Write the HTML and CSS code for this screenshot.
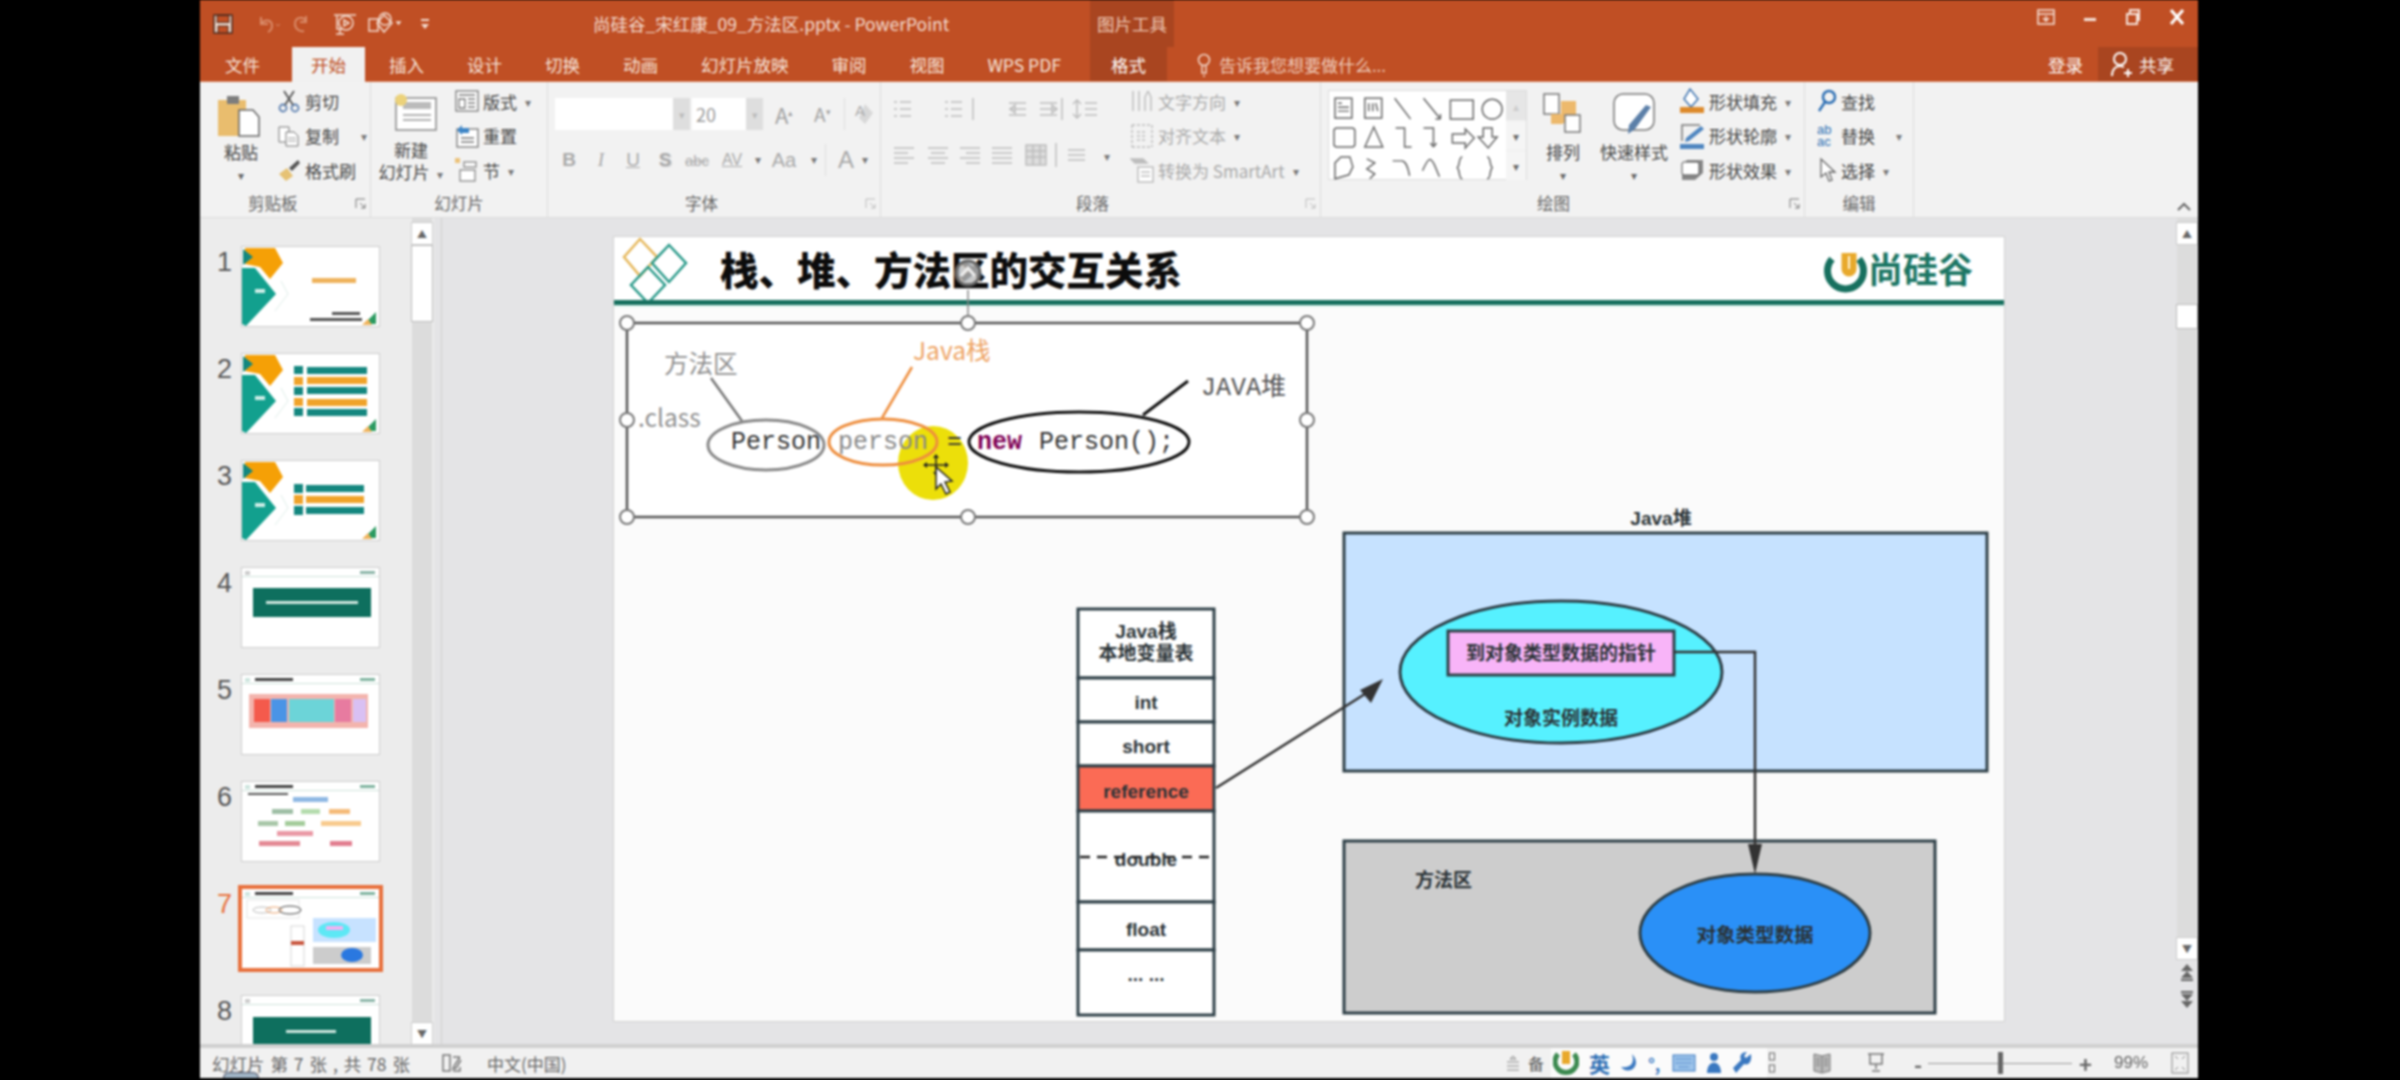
FILE: index.html
```html
<!DOCTYPE html>
<html lang="zh-CN">
<head>
    <meta charset="UTF-8">
    <title>尚硅谷_宋红康_09_方法区.pptx - PowerPoint</title>
    <link rel="stylesheet" href="styles.css">
</head>
<body>
<div class="app">
    <!-- title bar -->
    <div class="titlebar">
        <div class="qat">
            <svg class="save" width="20" height="20" viewBox="0 0 20 20"><rect x="1" y="1" width="18" height="18" fill="#f3dcd0" stroke="#4a2a1e" stroke-width="1.5"/><rect x="4" y="1.5" width="12" height="7" fill="#c04f24" stroke="#4a2a1e"/><rect x="5" y="12" width="10" height="7" fill="#c04f24" stroke="#4a2a1e"/></svg>
            <svg class="undo" width="24" height="20" viewBox="0 0 24 20" fill="none" stroke="#d98a68" stroke-width="2"><path d="M5 3v7h7"/><path d="M5 10c3-5 11-5 11 2 0 3-2 5-4 6"/><path d="M20 10l2 2 2-2" stroke-width="1"/></svg>
            <svg class="redo" width="18" height="20" viewBox="0 0 18 20" fill="none" stroke="#d98a68" stroke-width="2"><path d="M14 2v6h-6"/><path d="M14 7C11 2 3 3 3 10c0 5 5 8 9 7"/></svg>
            <svg class="present" width="24" height="24" viewBox="0 0 24 24" fill="none" stroke="#f3dcd0" stroke-width="1.5"><path d="M1 3h22"/><circle cx="13" cy="11" r="7"/><path d="M11 8l5 3-5 3z"/><path d="M4 4v13h6M7 17v5M3 22h8"/></svg>
            <svg class="shapes" width="35" height="24" viewBox="0 0 35 24" fill="none" stroke="#f3dcd0" stroke-width="1.5"><path d="M2 7h9v12H2z"/><path d="M17 3l8 8-8 9-7-9z"/><circle cx="18" cy="7" r="6"/><path d="M30 10l3 0-1.5 2z" fill="#f3dcd0"/></svg>
            <svg class="customize" width="10" height="14" viewBox="0 0 10 14" fill="#f3dcd0"><rect x="1" y="2" width="8" height="2"/><path d="M1 7h8l-4 5z"/></svg>
        </div>
        <div class="doc-title">尚硅谷_宋红康_09_方法区.pptx - PowerPoint</div>
        <div class="ctx-title">图片工具</div>
        <div class="win-btns">
            <svg width="18" height="18" viewBox="0 0 18 18" fill="none" stroke="#f6e3da" stroke-width="1.5"><rect x="1" y="2" width="16" height="14"/><path d="M1 6h16M9 8v5M6 10l3 3 3-3"/></svg>
            <svg width="14" height="18" viewBox="0 0 14 18" fill="#f6e3da"><rect x="1" y="10" width="12" height="3"/></svg>
            <svg width="16" height="18" viewBox="0 0 16 18" fill="none" stroke="#f6e3da" stroke-width="2"><rect x="2" y="6" width="10" height="10"/><path d="M5 5V2h9v10h-2"/></svg>
            <svg width="16" height="18" viewBox="0 0 16 18" fill="none" stroke="#fff" stroke-width="3"><path d="M2 2l12 14M14 2L2 16"/></svg>
        </div>
    </div>

    <!-- tabs -->
    <div class="tabs">
        <div class="tab file-tab">文件</div>
        <div class="tab active">开始</div>
        <div class="tab">插入</div>
        <div class="tab">设计</div>
        <div class="tab">切换</div>
        <div class="tab">动画</div>
        <div class="tab">幻灯片放映</div>
        <div class="tab">审阅</div>
        <div class="tab">视图</div>
        <div class="tab">WPS PDF</div>
        <div class="tab ctx-tab">格式</div>
        <svg class="bulb" width="14" height="24" viewBox="0 0 14 24" fill="none" stroke="#f3d9cc" stroke-width="1.5"><circle cx="7" cy="7" r="5.5"/><path d="M5 13v7h4v-7M6 23h2"/></svg>
        <div class="tell-me">告诉我您想要做什么...</div>
        <div class="login">登录</div>
        <div class="share">
            <svg width="24" height="28" viewBox="0 0 24 28" fill="none" stroke="#fff" stroke-width="2"><circle cx="10" cy="9" r="6"/><path d="M2 26c0-7 4-10 8-10 2 0 3 1 4 1M18 19v8M14 23h8"/></svg>
            <span>共享</span>
        </div>
    </div>

    <!-- ribbon -->
    <div class="ribbon">
        <div class="group g-clip">
            <div class="group-body">
                <div class="big-btn paste">
                    <svg width="42" height="42" viewBox="0 0 42 42"><rect x="0" y="5" width="28" height="36" fill="#e9bd6e"/><rect x="9" y="1" width="12" height="8" fill="#7d7d7d"/><path d="M21 15h14l6 7v19H21z" fill="#fff" stroke="#666" stroke-width="1.5"/></svg>
                    <div class="big-label">粘贴</div>
                    <div class="caret-line">▾</div>
                </div>
                <div class="small-col">
                    <div class="small-row"><svg width="24" height="24" viewBox="0 0 24 24" fill="none" stroke="#5b7fb0" stroke-width="1.8"><circle cx="6" cy="19" r="3.5"/><circle cx="18" cy="19" r="3.5"/><path d="M8 16L17 2M16 16L7 2" stroke="#555"/></svg><span>剪切</span></div>
                    <div class="small-row"><svg width="24" height="24" viewBox="0 0 24 24" fill="#fff" stroke="#777"><path d="M2 3h10v15H2z"/><path d="M9 8h8l4 4v10H9z"/><path d="M11 14h8M11 17h8" stroke="#999"/></svg><span>复制</span><i class="caret wide">▾</i></div>
                    <div class="small-row"><svg width="24" height="24" viewBox="0 0 24 24"><path d="M2 16l8-6 6 8-7 5z" fill="#e6c274"/><path d="M12 10l9-8 2 3-8 8z" fill="#555"/></svg><span>格式刷</span></div>
                </div>
            </div>
            <div class="group-label"><span></span><span>剪贴板</span><svg class="launcher" width="11" height="11" viewBox="0 0 11 11" fill="none" stroke="#777"><path d="M1 10V1h9M5 5l5 5M10 6v4H6"/></svg></div>
        </div>

        <div class="group g-slides">
            <div class="group-body">
                <div class="big-btn new-slide">
                    <svg width="44" height="38" viewBox="0 0 44 38"><rect x="3" y="5" width="40" height="32" fill="#fff" stroke="#888" stroke-width="1.5"/><rect x="10" y="9" width="28" height="7" fill="#bbb"/><path d="M10 22h28M10 27h28" stroke="#999" stroke-width="1.5"/><circle cx="8" cy="7" r="6" fill="#ecd27a"/></svg>
                    <div class="big-label">新建</div>
                    <div class="big-label tight">幻灯片 <i class="caret">▾</i></div>
                </div>
                <div class="small-col">
                    <div class="small-row"><svg width="24" height="24" viewBox="0 0 24 24" fill="#fff" stroke="#777" stroke-width="1.3"><rect x="1" y="2" width="22" height="20"/><path d="M4 6h16M4 10h6v9H4zM13 10h7M13 14h7M13 18h7"/></svg><span>版式</span><i class="caret">▾</i></div>
                    <div class="small-row"><svg width="24" height="24" viewBox="0 0 24 24" fill="#fff" stroke="#777" stroke-width="1.3"><rect x="2" y="5" width="21" height="18"/><path d="M6 14h13M6 18h13"/><path d="M2 6l5-5v3h7v5H7v2z" fill="#3f86c6" stroke="none"/></svg><span>重置</span></div>
                    <div class="small-row"><svg width="24" height="26" viewBox="0 0 24 26" fill="#fff" stroke="#888" stroke-width="1.3"><rect x="5" y="13" width="15" height="11"/><rect x="9" y="5" width="12" height="5"/><rect x="0" y="1" width="5" height="5" fill="#ecc27a" stroke="none"/></svg><span>节</span><i class="caret">▾</i></div>
                </div>
            </div>
            <div class="group-label"><span></span><span>幻灯片</span><span></span></div>
        </div>

        <div class="group g-font">
            <div class="group-body column">
                <div class="font-row">
                    <div class="combo name-combo"></div><div class="combo-arrow">▾</div>
                    <div class="combo size-combo">20</div><div class="combo-arrow">▾</div>
                    <span class="grow-a">A<sup>▴</sup></span>
                    <span class="shrink-a">A<sup>▾</sup></span>
                    <span class="vline"></span>
                    <svg class="eraser" width="22" height="24" viewBox="0 0 22 24"><path d="M12 2l8 9-8 11-6-6z" fill="#d8d8d8"/><text x="2" y="14" class="erase-a">A</text></svg>
                </div>
                <div class="format-row">
                    <span class="fmt w32 b">B</span><span class="fmt w32 it">I</span><span class="fmt w32 u">U</span><span class="fmt w32 b sh">S</span><span class="fmt w32 strike">abc</span><span class="fmt w40 av">AV</span><i class="caret">▾</i><span class="fmt w44">Aa</span><i class="caret">▾</i><span class="vline tall"></span><span class="fmt big-a">A</span><i class="caret">▾</i>
                </div>
            </div>
            <div class="group-label"><span></span><span>字体</span><svg class="launcher faint" width="11" height="11" viewBox="0 0 11 11" fill="none" stroke="#bbb"><path d="M1 10V1h9M5 5l5 5M10 6v4H6"/></svg></div>
        </div>

        <div class="group g-para">
            <div class="group-body">
                <div class="para-left">
                    <div class="para-row">
                        <svg width="180" height="24" viewBox="0 0 180 24" fill="none" stroke="#bdbdbd" stroke-width="1.5"><path d="M4 5h3M10 5h11M4 12h3M10 12h11M4 19h3M10 19h11"/><path d="M55 5h3M61 5h11M55 12h3M61 12h11M55 19h3M61 19h11"/><path d="M83 1v22"/><path d="M119 6h17M119 12h17M119 18h17M120 12l5-4v8zM150 6h17M150 12h17M150 18h17M167 12l-5-4v8z"/><path d="M172 1v22"/></svg>
                        <svg width="36" height="24" viewBox="0 0 36 24" fill="none" stroke="#bdbdbd" stroke-width="1.5"><path d="M7 4v16M3 7l4-4 4 4M3 17l4 4 4-4M15 6h12M15 12h12M15 18h12"/></svg>
                    </div>
                    <div class="para-row second">
                        <svg width="210" height="26" viewBox="0 0 210 26" fill="none" stroke="#bdbdbd" stroke-width="1.5"><path d="M4 6h20M4 11h14M4 16h20M4 21h14"/><path d="M38 6h20M41 11h14M38 16h20M41 21h14"/><path d="M70 6h20M76 11h14M70 16h20M76 21h14"/><path d="M102 6h20M102 11h20M102 16h20M102 21h20"/><rect x="136" y="3" width="20" height="20" fill="#ddd"/><path d="M136 9h20M136 15h20M143 3v20M150 3v20"/><path d="M166 1v24"/><path d="M178 8h17M178 13h17M178 18h17"/></svg>
                        <i class="caret">▾</i>
                    </div>
                </div>
                <div class="small-col para-text">
                    <div class="small-row"><svg width="24" height="24" viewBox="0 0 24 24" fill="none" stroke="#bdbdbd" stroke-width="1.5"><path d="M3 2v20M9 2v20M15 8v14M18 2l-3 6M18 2l3 6M21 8v14"/></svg><span>文字方向</span><i class="caret">▾</i></div>
                    <div class="small-row"><svg width="24" height="24" viewBox="0 0 24 24" fill="none" stroke="#bdbdbd" stroke-width="1.5"><path d="M2 1h20M2 23h20M7 8h10M7 12h10M7 16h10M2 1v22M22 1v22" stroke-dasharray="3 2"/></svg><span>对齐文本</span><i class="caret">▾</i></div>
                    <div class="small-row"><svg width="24" height="26" viewBox="0 0 24 26" fill="none" stroke="#bdbdbd" stroke-width="1.5"><path d="M1 2h12l4 4H5z" fill="#bdbdbd"/><rect x="8" y="10" width="15" height="15" fill="#fff"/><path d="M11 15h9M11 19h9"/></svg><span>转换为 SmartArt</span><i class="caret">▾</i></div>
                </div>
            </div>
            <div class="group-label"><span></span><span>段落</span><svg class="launcher faint" width="11" height="11" viewBox="0 0 11 11" fill="none" stroke="#bbb"><path d="M1 10V1h9M5 5l5 5M10 6v4H6"/></svg></div>
        </div>

        <div class="group g-draw">
            <div class="group-body">
                <div class="gallery">
                    <svg width="178" height="90" viewBox="0 0 178 90" fill="none" stroke="#666" stroke-width="1.5">
                        <rect x="6" y="7" width="17" height="20"/><path d="M9 12h4M9 16h11M9 20h11"/>
                        <rect x="36" y="7" width="17" height="20"/><path d="M40 20v-8M44 20v-8M49 20l-2-8"/>
                        <path d="M66 7l16 21M95 7l17 21M112 28v-5M112 28h-5"/>
                        <rect x="122" y="9" width="23" height="19"/><circle cx="164" cy="18" r="10"/>
                        <rect x="5" y="37" width="21" height="19" rx="3"/>
                        <path d="M36 56l9-20 9 20z"/>
                        <path d="M67 37h9v19h7M95 37h10v17M105 56l-3-4M105 56l3-4"/>
                        <path d="M146 47l-9-9v5h-13v9h13v5zM155 37h9v9h5l-9 11-10-11h5z"/>
                        <path d="M6 88V72l6-6h9l3 10-4 8z"/>
                        <path d="M38 68l8 4-8 6 8 5-5 5"/>
                        <path d="M64 70h9c4 0 6 5 8 15M94 80c6-14 8-14 12-6l5 12"/>
                        <path d="M134 66c-4 0-2 8-5 11 3 3 1 11 5 11M159 66c4 0 2 8 5 11-3 3-1 11-5 11"/>
                    </svg>
                    <div class="gallery-side">
                        <div class="g-btn faint">▴</div>
                        <div class="g-btn">▾</div>
                        <div class="g-btn">▾</div>
                    </div>
                </div>
                <div class="big-btn arrange">
                    <svg width="40" height="40" viewBox="0 0 40 40"><rect x="18" y="8" width="15" height="22" fill="#edb96c"/><rect x="1" y="1" width="15" height="20" fill="#fff" stroke="#777" stroke-width="1.5"/><rect x="22" y="22" width="15" height="17" fill="#fff" stroke="#777" stroke-width="1.5"/><rect x="8" y="21" width="12" height="10" fill="#edb96c"/></svg>
                    <div class="big-label">排列</div>
                    <div class="caret-line">▾</div>
                </div>
                <div class="big-btn quick">
                    <svg width="42" height="42" viewBox="0 0 42 42"><rect x="1" y="1" width="40" height="36" rx="9" fill="#fff" stroke="#777" stroke-width="1.5"/><path d="M38 14L22 36l-7 5 1-9 17-20z" fill="#5b7fa8"/></svg>
                    <div class="big-label">快速样式</div>
                    <div class="caret-line">▾</div>
                </div>
                <div class="small-col">
                    <div class="small-row"><svg width="26" height="26" viewBox="0 0 26 26"><path d="M11 1l8 10-7 8-7-8z" fill="#fff" stroke="#3f74b0" stroke-width="1.5"/><rect x="1" y="19" width="24" height="6" fill="#dd8a2c"/></svg><span>形状填充</span><i class="caret">▾</i></div>
                    <div class="small-row"><svg width="26" height="26" viewBox="0 0 26 26"><path d="M3 18V2h18" fill="none" stroke="#777" stroke-width="1.5"/><path d="M22 3l3 3-15 12-4 1 1-4z" fill="#4f86c0"/><rect x="1" y="21" width="24" height="5" fill="#4f86c0"/></svg><span>形状轮廓</span><i class="caret">▾</i></div>
                    <div class="small-row"><svg width="26" height="26" viewBox="0 0 26 26"><path d="M8 3h16v13l-8 7H3V8z" fill="#888"/><rect x="3" y="5" width="17" height="13" rx="2" fill="#fff" stroke="#555"/></svg><span>形状效果</span><i class="caret">▾</i></div>
                </div>
            </div>
            <div class="group-label"><span></span><span>绘图</span><svg class="launcher" width="11" height="11" viewBox="0 0 11 11" fill="none" stroke="#777"><path d="M1 10V1h9M5 5l5 5M10 6v4H6"/></svg></div>
        </div>

        <div class="group g-edit">
            <div class="group-body">
                <div class="small-col">
                    <div class="small-row"><svg width="20" height="24" viewBox="0 0 20 24" fill="none" stroke="#2f70b4" stroke-width="2.5"><circle cx="12" cy="8" r="6"/><path d="M8 13l-6 9"/></svg><span>查找</span></div>
                    <div class="small-row"><span class="ab-ac">ab<br>ac</span><span>替换</span><i class="caret wide2">▾</i></div>
                    <div class="small-row"><svg width="20" height="26" viewBox="0 0 20 26" fill="#fff" stroke="#666" stroke-width="1.3"><path d="M4 2v18l5-4 3 8 3-1-3-8h6z"/></svg><span>选择</span><i class="caret">▾</i></div>
                </div>
            </div>
            <div class="group-label"><span></span><span>编辑</span><span></span></div>
        </div>

        <svg class="collapse" width="16" height="10" viewBox="0 0 16 10" fill="none" stroke="#666" stroke-width="2"><path d="M2 9l6-6 6 6"/></svg>
    </div>

    <!-- main -->
    <div class="main">
        <div class="thumbs-pane">
            <div class="thumbs">
                <div class="thumb-item"><div class="num">1</div><div class="thumb">
                    <svg viewBox="0 0 137 79"><use href="#cover"/><rect x="70" y="31" width="44" height="5" fill="#efb35c"/><rect x="90" y="65" width="28" height="3" fill="#555"/><rect x="68" y="71" width="52" height="3" fill="#555"/></svg>
                </div></div>
                <div class="thumb-item"><div class="num">2</div><div class="thumb">
                    <svg viewBox="0 0 137 79"><use href="#cover"/><rect x="52" y="12" width="9" height="8" fill="#14877f"/><rect x="65" y="13" width="60" height="7" fill="#14877f"/><rect x="52" y="23" width="9" height="8" fill="#f0a32a"/><rect x="65" y="23" width="60" height="7" fill="#f0a32a"/><rect x="52" y="33" width="9" height="8" fill="#14877f"/><rect x="65" y="33" width="60" height="7" fill="#14877f"/><rect x="52" y="44" width="9" height="8" fill="#f0a32a"/><rect x="65" y="45" width="60" height="7" fill="#f0a32a"/><rect x="52" y="54" width="9" height="8" fill="#14877f"/><rect x="65" y="55" width="60" height="7" fill="#14877f"/></svg>
                </div></div>
                <div class="thumb-item"><div class="num">3</div><div class="thumb">
                    <svg viewBox="0 0 137 79"><use href="#cover"/><rect x="52" y="23" width="9" height="9" fill="#14877f"/><rect x="64" y="24" width="58" height="7" fill="#14877f"/><rect x="52" y="34" width="9" height="9" fill="#f0a32a"/><rect x="64" y="35" width="58" height="7" fill="#f0a32a"/><rect x="52" y="45" width="9" height="9" fill="#14877f"/><rect x="64" y="46" width="58" height="7" fill="#14877f"/></svg>
                </div></div>
                <div class="thumb-item"><div class="num">4</div><div class="thumb">
                    <svg viewBox="0 0 137 79"><rect x="3" y="3" width="5" height="4" fill="#ccc"/><rect x="118" y="3" width="15" height="3" fill="#8bb5a8"/><rect y="8" width="137" height="1" fill="#cfe3dc"/><rect x="11" y="20" width="118" height="29" fill="#0e6f5e"/><rect x="24" y="33" width="92" height="3" fill="#cfe7df"/></svg>
                </div></div>
                <div class="thumb-item"><div class="num">5</div><div class="thumb">
                    <svg viewBox="0 0 137 79"><use href="#pagehead"/><rect x="7" y="19" width="119" height="34" fill="#f3b4ad"/><rect x="12" y="24" width="16" height="23" fill="#f45a4c"/><rect x="29" y="24" width="16" height="23" fill="#4a94e6"/><rect x="47" y="24" width="45" height="23" fill="#6cd4d8"/><rect x="93" y="24" width="16" height="23" fill="#e77ba0"/><rect x="111" y="24" width="13" height="23" fill="#d9c0f3"/></svg>
                </div></div>
                <div class="thumb-item"><div class="num">6</div><div class="thumb">
                    <svg viewBox="0 0 137 79"><use href="#pagehead"/><rect x="6" y="11" width="40" height="2" fill="#555"/><rect x="51" y="15" width="35" height="5" fill="#8fb8e4"/><rect x="30" y="27" width="21" height="5" fill="#9fbfa6"/><rect x="59" y="27" width="19" height="5" fill="#b5dcae"/><rect x="87" y="27" width="21" height="5" fill="#f5bb7a"/><rect x="16" y="39" width="20" height="5" fill="#a9c7a9"/><rect x="43" y="39" width="20" height="5" fill="#a4cc9b"/><rect x="79" y="39" width="40" height="5" fill="#f8cb8e"/><rect x="35" y="49" width="36" height="5" fill="#ea9aa6"/><rect x="17" y="59" width="41" height="5" fill="#e48a95"/><rect x="88" y="59" width="22" height="5" fill="#e27e90"/></svg>
                </div></div>
                <div class="thumb-item current"><div class="num">7</div><div class="thumb">
                    <svg viewBox="0 0 137 79"><use href="#pagehead"/><rect x="5" y="11" width="52" height="18" fill="none" stroke="#ccc" stroke-width=".5"/><ellipse cx="20" cy="21" rx="9" ry="3" fill="none" stroke="#bbb"/><ellipse cx="32" cy="21" rx="8" ry="3" fill="none" stroke="#eda36c"/><ellipse cx="48" cy="21" rx="11" ry="4" fill="none" stroke="#444"/><rect x="71" y="29" width="63" height="24" fill="#c7e2ff"/><ellipse cx="92" cy="41" rx="16" ry="8" fill="#5de8f5"/><rect x="84" y="37" width="17" height="4" fill="#f2b2f2"/><rect x="49" y="37" width="13" height="40" fill="#fff" stroke="#bbb" stroke-width=".6"/><rect x="49" y="52" width="13" height="4" fill="#c9573f"/><rect x="71" y="58" width="58" height="17" fill="#ccc"/><ellipse cx="110" cy="66" rx="11" ry="7" fill="#2a78e0"/></svg>
                </div></div>
                <div class="thumb-item"><div class="num">8</div><div class="thumb">
                    <svg viewBox="0 0 137 79"><rect x="3" y="3" width="5" height="4" fill="#ccc"/><rect x="118" y="3" width="15" height="3" fill="#8bb5a8"/><rect y="8" width="137" height="1" fill="#cfe3dc"/><rect x="11" y="21" width="118" height="30" fill="#0e6f5e"/><rect x="44" y="34" width="50" height="3" fill="#cfe7df"/></svg>
                </div></div>
            </div>
            <div class="v-scroll thumbs-scroll">
                <div class="sb-btn">▲</div>
                <div class="sb-thumb tall-thumb"></div>
                <div class="sb-track"></div>
                <div class="sb-btn">▼</div>
            </div>
        </div>

        <div class="canvas">
            <div class="slide">
                <svg class="slide-svg" viewBox="614 237 1390 784" width="1390" height="784">
                    <!-- slide header -->
                    <rect x="614" y="237" width="1390" height="65" fill="#fff"/>
                    <g fill="none" stroke-width="2.5">
                        <path d="M640 239l17 18-17 19-16-19z" stroke="#e6b85c"/>
                        <path d="M669 245l17 18-17 19-17-19z" stroke="#2a9a8a"/>
                        <path d="M648 267l17 18-17 18-17-18z" stroke="#2a9a8a"/>
                    </g>
                    <text x="720" y="285" class="slide-title">栈、堆、方法区的交互关系</text>
                    <path d="M1832 259a18 18 0 1 0 27 0" fill="none" stroke="#17705f" stroke-width="7"/>
                    <path d="M1845 253v16a4 4 0 0 0 8 0v-16" fill="#e8a92c" stroke="#e8a92c" stroke-width="7"/>
                    <path d="M1849 256v13" stroke="#fff4d8" stroke-width="2"/>
                    <text x="1868" y="283" class="logo-text">尚硅谷</text>
                    <rect x="614" y="300" width="1390" height="5" fill="#17705f"/>
                    <rect x="614" y="305" width="1390" height="2" fill="#d9f1ec"/>

                    <!-- selected code picture -->
                    <rect x="627" y="323" width="680" height="194" fill="#fff" stroke="#555" stroke-width="2.5"/>
                    <text x="664" y="373" class="note gray">方法区</text>
                    <text x="913" y="360" class="note orange">Java栈</text>
                    <text x="1201" y="395" class="note-mono">JAVA堆</text>
                    <text x="638" y="427" class="note gray">.class</text>
                    <path d="M711 378l31 43" stroke="#777" stroke-width="2.5"/>
                    <path d="M912 367l-30 51" stroke="#ee8e3e" stroke-width="2.5"/>
                    <path d="M1188 381l-45 34" stroke="#111" stroke-width="3"/>
                    <ellipse cx="933" cy="463" rx="35" ry="37" fill="#ecdf0a"/>
                    <ellipse cx="766" cy="445" rx="58" ry="25" fill="none" stroke="#888" stroke-width="3"/>
                    <ellipse cx="883" cy="442" rx="54" ry="23" fill="none" stroke="#ee8e3e" stroke-width="3"/>
                    <ellipse cx="1079" cy="442" rx="110" ry="30" fill="none" stroke="#111" stroke-width="3"/>
                    <text x="731" y="449" class="code">Person</text>
                    <text x="838" y="449" class="code faded">person</text>
                    <text x="947" y="449" class="code">=</text>
                    <text x="977" y="449" class="code kw">new</text>
                    <text x="1039" y="449" class="code">Person();</text>

                    <!-- selection handles -->
                    <path d="M968 290v33" stroke="#888" stroke-width="1.5"/>
                    <g fill="#fff" stroke="#777" stroke-width="2">
                        <circle cx="627" cy="323" r="7"/><circle cx="968" cy="323" r="7"/><circle cx="1307" cy="323" r="7"/>
                        <circle cx="627" cy="420" r="7"/><circle cx="1307" cy="420" r="7"/>
                        <circle cx="627" cy="517" r="7"/><circle cx="968" cy="517" r="7"/><circle cx="1307" cy="517" r="7"/>
                    </g>
                    <circle cx="968" cy="273" r="12" fill="#bbb" fill-opacity=".8" stroke="#666" stroke-width="3"/>
                    <path d="M961 276l7-8 7 8" fill="none" stroke="#eee" stroke-width="3"/>

                    <!-- cursor -->
                    <path d="M936 457v18M926 465h20" stroke="#222" stroke-width="1.5"/>
                    <path d="M936 454l-3 4h6zM936 476l-3-4h6zM923 465l4-3v6zM949 465l-4-3v6z" fill="#222"/>
                    <path d="M936 467v22l5-5 5 10 4-2-5-10 7-1z" fill="#fff" stroke="#222" stroke-width="1.5"/>

                    <!-- heap -->
                    <text x="1661" y="525" class="diagram-label center">Java堆</text>
                    <rect x="1344" y="533" width="643" height="238" fill="#c6e2ff" class="box"/>
                    <ellipse cx="1561" cy="672" rx="161" ry="71" fill="#56f1ff" class="box"/>
                    <rect x="1448" y="631" width="226" height="44" fill="#f8b4f8" class="box"/>
                    <text x="1561" y="660" class="diagram-label center">到对象类型数据的指针</text>
                    <text x="1561" y="725" class="diagram-label center">对象实例数据</text>

                    <!-- method area -->
                    <rect x="1344" y="841" width="591" height="172" fill="#cdcdcd" class="box"/>
                    <text x="1415" y="887" class="diagram-label">方法区</text>
                    <ellipse cx="1755" cy="933" rx="115" ry="59" fill="#2a90f7" class="box"/>
                    <text x="1755" y="942" class="diagram-label center big">对象类型数据</text>

                    <!-- stack -->
                    <g class="box" fill="#fff">
                        <rect x="1078" y="609" width="136" height="69"/>
                        <rect x="1078" y="678" width="136" height="44"/>
                        <rect x="1078" y="722" width="136" height="44"/>
                        <rect x="1078" y="766" width="136" height="45" fill="#fb6b55"/>
                        <rect x="1078" y="811" width="136" height="91"/>
                        <rect x="1078" y="902" width="136" height="48"/>
                        <rect x="1078" y="950" width="136" height="65"/>
                    </g>
                    <text x="1146" y="638" class="diagram-label center">Java栈</text>
                    <text x="1146" y="660" class="diagram-label center">本地变量表</text>
                    <text x="1146" y="709" class="diagram-label center">int</text>
                    <text x="1146" y="753" class="diagram-label center">short</text>
                    <text x="1146" y="798" class="diagram-label center">reference</text>
                    <text x="1146" y="866" class="diagram-label center">double</text>
                    <text x="1146" y="936" class="diagram-label center">float</text>
                    <text x="1146" y="981" class="diagram-label center">... ...</text>
                    <path d="M1080 857h132" stroke="#222" stroke-width="2.5" stroke-dasharray="10 7"/>

                    <!-- arrows -->
                    <path d="M1216 788L1376 687" class="link"/>
                    <path d="M1383 679l-23 11 11 13z" fill="#333"/>
                    <path d="M1674 652h81v208" class="link"/>
                    <path d="M1755 874l-7-30h14z" fill="#333"/>
                </svg>
            </div>
            <div class="v-scroll main-scroll">
                <div class="sb-btn">▲</div>
                <div class="sb-track short"></div>
                <div class="sb-thumb small-thumb"></div>
                <div class="sb-track"></div>
                <div class="sb-btn">▼</div>
                <div class="page-btn"><svg width="14" height="18" viewBox="0 0 14 18" fill="#666"><path d="M7 0l6 7H1zM7 7l6 7H1z"/><rect x="1" y="15" width="12" height="2"/></svg></div>
                <div class="page-btn"><svg width="14" height="18" viewBox="0 0 14 18" fill="#666"><rect x="1" y="1" width="12" height="2"/><path d="M1 4h12l-6 7zM1 11h12l-6 7z"/></svg></div>
            </div>
        </div>
    </div>

    <!-- status bar -->
    <div class="statusbar">
        <div class="status-count">幻灯片 第 7 张 , 共 78 张</div>
        <svg class="notes-ico" width="20" height="20" viewBox="0 0 20 20" fill="none" stroke="#777" stroke-width="1.5"><path d="M1 2h7v16H1zM11 4h7M11 18h7v-4M18 4l-6 9-1 3 3-1 5-8"/></svg>
        <div class="status-lang">中文(中国)</div>
        <div class="status-right">
            <svg width="14" height="20" viewBox="0 0 14 20" fill="none" stroke="#888"><path d="M7 3l-3 3h6zM1 9h12M1 13h12M1 17h12"/></svg>
            <span class="st-bei">备</span>
            <div class="ime">
                <svg width="26" height="28" viewBox="0 0 26 28" fill="none"><path d="M5 5a11 11 0 1 0 16 0" stroke="#3c8a50" stroke-width="5"/><path d="M13 2v13" stroke="#e8a92c" stroke-width="8"/></svg>
                <span class="ime-en">英</span>
                <svg width="16" height="20" viewBox="0 0 16 20" fill="#3a78c0"><path d="M12 1c3 9-1 14-11 13 5 6 14 4 15-4 0-4-2-7-4-9z"/></svg>
                <span class="ime-punc">°,</span>
                <svg width="24" height="20" viewBox="0 0 24 20" fill="#9cc3ea" stroke="#3a78c0"><rect x="1" y="2" width="22" height="16"/><path d="M4 6h16M4 10h16M7 14h10" stroke-dasharray="2 1"/></svg>
                <svg width="16" height="22" viewBox="0 0 16 22" fill="#3a78c0"><circle cx="8" cy="5" r="4"/><path d="M1 21c0-14 14-14 14 0z"/></svg>
                <svg width="20" height="22" viewBox="0 0 20 22" fill="#3a78c0"><path d="M19 2l-5 4-2-2 3-4c-5 0-8 3-6 8L1 16l3 5 8-9c5 2 8-3 7-10z"/></svg>
            </div>
            <svg class="ime-squares" width="6" height="22" viewBox="0 0 6 22" fill="none" stroke="#666"><rect x=".5" y="1" width="5" height="7"/><rect x=".5" y="13" width="5" height="7"/></svg>
            <svg class="view-ico" width="18" height="22" viewBox="0 0 18 22" fill="#bbb" stroke="#777"><path d="M1 2l8 2 8-2v17l-8 2-8-2zM9 4v17M3 7h4M3 10h4M3 13h4M11 7h4M11 10h4M11 13h4"/></svg>
            <svg class="view-ico2" width="16" height="22" viewBox="0 0 16 22" fill="none" stroke="#777" stroke-width="1.5"><path d="M0 2h16M2 2v10h12V2M8 12v5M4 19h8"/></svg>
            <span class="zoom-minus">-</span>
            <div class="zoom-slider"><div class="zoom-knob"></div></div>
            <span class="zoom-plus">+</span>
            <span class="zoom-val">99%</span>
            <svg class="fit-ico" width="18" height="22" viewBox="0 0 18 22" fill="none" stroke="#888"><rect x="1" y="1" width="16" height="20"/><path d="M4 4l3 3M14 4l-3 3M4 18l3-3M14 18l-3-3"/></svg>
        </div>
        <div class="dome"></div>
    </div>
</div>

<!-- shared thumbnail art -->
<svg class="defs" width="0" height="0">
    <defs>
        <g id="cover">
            <path d="M3 1h30l8 15-13 16-10-12-15-3z" fill="#f5a006"/>
            <path d="M1 2l10 8-10 8z" fill="#12877f"/>
            <path d="M0 21l13 0 21 26-30 32-4-2z" fill="#12a08e"/>
            <path d="M39 34l7 13-13 17" fill="none" stroke="#dfeee9"/>
            <rect x="13" y="42" width="10" height="4" fill="#cfeee8"/>
            <path d="M122 77l12-12v12z" fill="#2a9a60"/>
            <path d="M120 78l6-6 4 6z" fill="#efb35c"/>
        </g>
        <g id="pagehead">
            <rect x="3" y="3" width="5" height="4" fill="#cde5de"/>
            <rect x="13" y="3" width="38" height="3" fill="#444"/>
            <rect x="118" y="3" width="15" height="3" fill="#7fb39f"/>
            <rect y="8" width="137" height="1" fill="#cfe3dc"/>
        </g>
    </defs>
</svg>
</body>
</html>
```
FILE: styles.css
```css
* {
    box-sizing: border-box;
}
html, body {
    margin: 0;
    height: 100%;
    background: #000;
    overflow: hidden;
}
.defs {
    position: absolute;
}
.app {
    width: 1998px;
    height: 1078px;
    margin-left: 200px;
    display: flex;
    flex-direction: column;
    font-family: "Noto Sans CJK SC", "Liberation Sans", sans-serif;
    color: #555;
    background: #f1f1f1;
    filter: blur(0.8px);
}

/* title bar */
.titlebar {
    height: 47px;
    flex: none;
    display: flex;
    background: #c04f24;
    color: #f4ded3;
}
.qat {
    display: flex;
    align-items: center;
    width: 393px;
    padding: 0 0 0 13px;
}
.qat .undo { margin-left: 23px; }
.qat .redo { margin-left: 12px; }
.qat .present { margin-left: 23px; }
.qat .shapes { margin-left: 10px; }
.qat .customize { margin-left: 18px; }
.doc-title {
    width: 497px;
    font-size: 17.5px;
    line-height: 47px;
    white-space: nowrap;
}
.ctx-title {
    width: 84px;
    background: #a94520;
    font-size: 17.5px;
    line-height: 47px;
    text-align: center;
    color: #eec9b6;
}
.win-btns {
    margin-left: auto;
    display: flex;
    align-items: center;
    gap: 28px;
    padding: 0 13px 14px 0;
}

/* tabs */
.tabs {
    height: 35px;
    flex: none;
    display: flex;
    align-items: stretch;
    padding-left: 6px;
    gap: 5px;
    background: #c04f24;
    color: #f7e6dd;
    font-size: 17.5px;
    line-height: 35px;
    border-bottom: 1px solid #d97f58;
}
.tab {
    padding: 0 19px;
    white-space: nowrap;
}
.file-tab {
    margin-right: 8px;
}
.tab.active {
    background: #f1f1f1;
    color: #c04f24;
    margin-bottom: -1px;
}
.ctx-tab {
    background: #a94520;
    margin-left: 5px;
    padding: 0 21px;
    color: #fff;
}
.bulb {
    margin: 6px 0 0 25px;
}
.tell-me {
    margin-left: 3px;
    color: #efcdbd;
    font-size: 17px;
}
.login {
    margin-left: auto;
    color: #fff;
}
.share {
    width: 100px;
    margin-left: 10px;
    display: flex;
    align-items: center;
    gap: 5px;
    padding-left: 12px;
    background: #a94520;
    color: #fff;
}

/* ribbon */
.ribbon {
    height: 136px;
    flex: none;
    display: flex;
    background: #f2f2f2;
    border-bottom: 1px solid #dcdcdc;
    font-size: 17px;
}
.group {
    display: flex;
    flex-direction: column;
    flex: none;
    border-right: 1px solid #dcdcdc;
}
.g-clip { width: 171px; }
.g-slides { width: 177px; }
.g-font { width: 333px; }
.g-para { width: 440px; }
.g-draw { width: 484px; }
.g-edit { width: 109px; }
.group-body {
    flex: 1;
    display: flex;
    min-height: 0;
}
.group-body.column {
    flex-direction: column;
}
.group-label {
    height: 25px;
    flex: none;
    display: grid;
    grid-template-columns: 1fr auto 1fr;
    align-items: center;
    padding-bottom: 2px;
    line-height: 23px;
    color: #666;
    font-size: 16.5px;
}
.g-clip .group-label { grid-template-columns: 48px auto 1fr; }
.g-font .group-label { grid-template-columns: 137px auto 1fr; }
.g-para .group-label { grid-template-columns: 195px auto 1fr; }
.g-draw .group-label { grid-template-columns: 216px auto 1fr; }
.launcher {
    justify-self: end;
    margin-right: 4px;
}
.big-btn {
    display: flex;
    flex-direction: column;
    align-items: center;
    padding-top: 11px;
    line-height: 22px;
}
.big-label {
    margin-top: 8px;
    white-space: nowrap;
    color: #444;
}
.big-label.tight {
    margin-top: 0;
}
.caret-line {
    font-size: 12px;
    color: #666;
    margin-top: 1px;
}
.caret {
    font-style: normal;
    font-size: 12px;
    color: #777;
    margin-left: 4px;
}
.caret.wide { margin-left: 18px; }
.caret.wide2 { margin-left: 17px; }
.small-col {
    display: flex;
    flex-direction: column;
    padding-top: 2px;
}
.small-row {
    height: 34.5px;
    flex: none;
    display: flex;
    align-items: center;
    gap: 4px;
    white-space: nowrap;
    color: #444;
}
.paste { width: 60px; margin: 0 6px 0 11px; padding-top: 13px; }
.paste svg { margin-right: 4px; }
.paste .big-label { margin-top: 4px; }
.new-slide { width: 66px; margin: 0 11px 0 7px; }
.new-slide svg { margin-left: 8px; }

.font-row {
    display: flex;
    align-items: center;
    height: 33px;
    margin: 15px 0 0 7px;
    color: #a2a2a2;
}
.combo {
    height: 32px;
    background: #fff;
    line-height: 32px;
    padding-left: 4px;
}
.name-combo { width: 118px; }
.size-combo { width: 54px; margin-left: 2px; color: #999; font-size: 18px; }
.combo-arrow {
    width: 17px;
    height: 32px;
    background: #dedede;
    color: #bbb;
    font-size: 11px;
    line-height: 32px;
    text-align: center;
}
.grow-a, .shrink-a {
    font-size: 22px;
    margin-left: 12px;
    width: 27px;
}
.shrink-a {
    font-size: 19px;
    margin-left: 12px;
}
.grow-a sup, .shrink-a sup {
    font-size: 9px;
}
.vline {
    width: 1px;
    height: 32px;
    background: #ddd;
    margin-left: 3px;
}
.vline.tall {
    margin: 0 8px 0 8px;
}
.eraser {
    margin-left: 8px;
}
.erase-a {
    font-size: 15px;
    fill: #aaa;
    font-family: "Liberation Sans", sans-serif;
}
.format-row {
    display: flex;
    align-items: center;
    height: 32px;
    margin: 14px 0 0 5px;
    color: #a9a9a9;
    font-family: "Liberation Sans", sans-serif;
}
.fmt {
    text-align: center;
    font-size: 19px;
}
.w32 { width: 32px; }
.w40 { width: 38px; }
.w44 { width: 46px; font-size: 20px; }
.fmt.b { font-weight: bold; }
.fmt.it { font-style: italic; font-family: "Liberation Serif", serif; }
.fmt.u { text-decoration: underline; }
.fmt.sh { text-shadow: 1px 1px 1px #ccc; }
.fmt.strike { text-decoration: line-through; font-size: 15px; }
.fmt.av { font-size: 16px; text-decoration: underline; }
.fmt.big-a { font-size: 24px; width: 24px; }

.para-left {
    width: 241px;
    padding: 11px 0 0 9px;
}
.para-row {
    display: flex;
    height: 32px;
    align-items: center;
}
.para-row.second {
    margin-top: 14px;
}
.para-text {
    margin-left: 8px;
}
.para-text .small-row {
    color: #a9a9a9;
}

.gallery {
    width: 199px;
    height: 90px;
    margin: 8px 0 0 7px;
    display: flex;
    background: #fff;
    border: 1px solid #dcdcdc;
}
.gallery-side {
    width: 20px;
    display: flex;
    flex-direction: column;
    margin-left: auto;
    gap: 1px;
    background: #eee;
}
.g-btn {
    flex: 1;
    text-align: center;
    font-size: 12px;
    line-height: 29px;
    background: #f5f5f5;
    color: #666;
}
.g-btn.faint { color: #ccc; background: #e6e6e6; }
.arrange { width: 44px; margin-left: 14px; }
.quick { width: 74px; margin-left: 12px; }
.quick .big-label { margin-top: 6px; }
.g-draw .small-col { margin-left: 8px; }
.g-edit .small-col { margin-left: 12px; }
.ab-ac {
    font-family: "Liberation Sans", sans-serif;
    font-size: 13px;
    line-height: 12px;
    width: 20px;
    color: #2f70b4;
}
.collapse {
    margin: 119px 0 0 262px;
}

/* main area */
.main {
    flex: 1;
    display: flex;
    min-height: 0;
    background: #e4e4e6;
    border-bottom: 4px solid #d0d0d0;
}
.thumbs-pane {
    width: 241px;
    flex: none;
    display: flex;
    background: #ececec;
    border-right: 7px solid #e4e4e6;
    box-shadow: 1px 0 0 #cfcfcf;
}
.thumbs {
    width: 212px;
    flex: none;
    padding-top: 29px;
    overflow: hidden;
    display: flex;
    flex-direction: column;
    gap: 28px;
    background: #ececec;
}
.thumb-item {
    display: flex;
    height: 79px;
    flex: none;
}
.num {
    width: 32px;
    text-align: right;
    font-size: 27px;
    line-height: 30px;
    color: #555;
    font-family: "Liberation Sans", sans-serif;
}
.thumb {
    width: 137px;
    height: 79px;
    margin-left: 10px;
    background: #fff;
    box-shadow: 0 0 0 1px #ccc;
}
.thumb svg {
    display: block;
    width: 137px;
    height: 79px;
}
.current .thumb {
    box-shadow: 0 0 0 4px #e8703c;
}
.current .num {
    color: #e8703c;
}
.v-scroll {
    width: 20px;
    flex: none;
    display: flex;
    flex-direction: column;
    background: #dcdcdc;
    padding-top: 5px;
}
.sb-btn {
    height: 21px;
    flex: none;
    background: #fff;
    color: #666;
    font-size: 10px;
    line-height: 21px;
    text-align: center;
    box-shadow: 0 0 0 1px #ccc;
}
.sb-thumb {
    flex: none;
    background: #fff;
    box-shadow: 0 0 0 1px #bbb;
}
.tall-thumb {
    height: 75px;
    margin-top: 2px;
}
.small-thumb {
    height: 23px;
}
.sb-track {
    flex: 1;
}
.sb-track.short {
    flex: none;
    height: 61px;
}
.canvas {
    flex: 1;
    display: flex;
    padding-left: 173px;
}
.slide {
    width: 1390px;
    height: 784px;
    margin-top: 19px;
    background: #fbfbfb;
    box-shadow: 0 0 0 1px #d2d2d2;
}
.slide-svg {
    display: block;
}
.main-scroll {
    margin-left: 173px;
    padding-bottom: 33px;
    background: linear-gradient(#dcdcdc 741px, #e4e4e6 741px);
}
.page-btn {
    height: 24px;
    flex: none;
    margin-top: 2px;
    display: flex;
    align-items: center;
    justify-content: center;
}
.page-btn:first-of-type {
    margin-top: 3px;
}

/* slide text */
.slide-title {
    font-size: 38.5px;
    font-weight: 900;
    fill: #0c0c0c;
}
.logo-text {
    font-size: 35px;
    font-weight: 700;
    fill: #1c7664;
}
.note {
    font-size: 24.5px;
}
.note.gray { fill: #909090; }
.note.orange { fill: #eea465; }
.note-mono {
    font-size: 25px;
    fill: #555;
    font-family: "Liberation Mono", "Noto Sans CJK SC", monospace;
}
.code {
    font-family: "Liberation Mono", monospace;
    font-size: 25px;
    fill: #333;
}
.code.faded { fill: #888; }
.code.kw { fill: #7f0055; font-weight: bold; }
.box {
    stroke: #2e3f47;
    stroke-width: 3;
}
.link {
    fill: none;
    stroke: #333;
    stroke-width: 2.5;
}
.diagram-label {
    font-family: "Liberation Sans", "Noto Sans CJK SC", sans-serif;
    font-size: 19px;
    font-weight: 700;
    fill: #2a3236;
}
.diagram-label.center {
    text-anchor: middle;
}
.diagram-label.big {
    font-size: 19.5px;
}

/* status bar */
.statusbar {
    height: 30px;
    flex: none;
    position: relative;
    display: flex;
    align-items: center;
    padding-left: 12px;
    background: #f1f1f1;
    font-size: 17px;
    color: #666;
}
.status-count {
    width: 230px;
    white-space: nowrap;
    word-spacing: 2px;
    font-size: 17.5px;
}
.status-lang {
    margin-left: 25px;
    font-size: 17px;
}
.status-right {
    margin-left: auto;
    display: flex;
    align-items: center;
    height: 100%;
    padding-right: 9px;
}
.st-bei {
    width: 16px;
    margin: 0 7px 0 8px;
    font-size: 16px;
    color: #555;
}
.ime {
    width: 216px;
    height: 30px;
    display: flex;
    align-items: center;
    gap: 10px;
    padding-left: 2px;
    background: #fbfbfb;
}
.ime-en {
    color: #2f70b4;
    font-weight: 700;
    font-size: 21px;
}
.ime-punc {
    color: #3a78c0;
    font-weight: 700;
    width: 12px;
    margin: 0 2px;
}
.ime-squares { margin-left: 2px; }
.view-ico { margin-left: 38px; }
.view-ico2 { margin-left: 37px; }
.zoom-minus {
    margin-left: 30px;
    width: 7px;
    font-size: 22px;
    font-weight: 700;
    line-height: 1;
}
.zoom-slider {
    width: 144px;
    height: 1px;
    margin-left: 7px;
    background: #999;
    display: flex;
    align-items: center;
    justify-content: center;
}
.zoom-knob {
    width: 5px;
    height: 22px;
    flex: none;
    background: #666;
}
.zoom-plus {
    margin-left: 7px;
    width: 12px;
    font-size: 22px;
    font-weight: 700;
    line-height: 1;
}
.zoom-val {
    margin-left: 23px;
    width: 34px;
    font-size: 17px;
    font-family: "Liberation Sans", sans-serif;
}
.fit-ico { margin-left: 23px; }
.dome {
    position: absolute;
    left: 23px;
    bottom: 0;
    width: 36px;
    height: 6px;
    border-radius: 18px 18px 0 0;
    background: #9fb3c4;
    border: 1px solid #556;
    border-bottom: 0;
}
```
